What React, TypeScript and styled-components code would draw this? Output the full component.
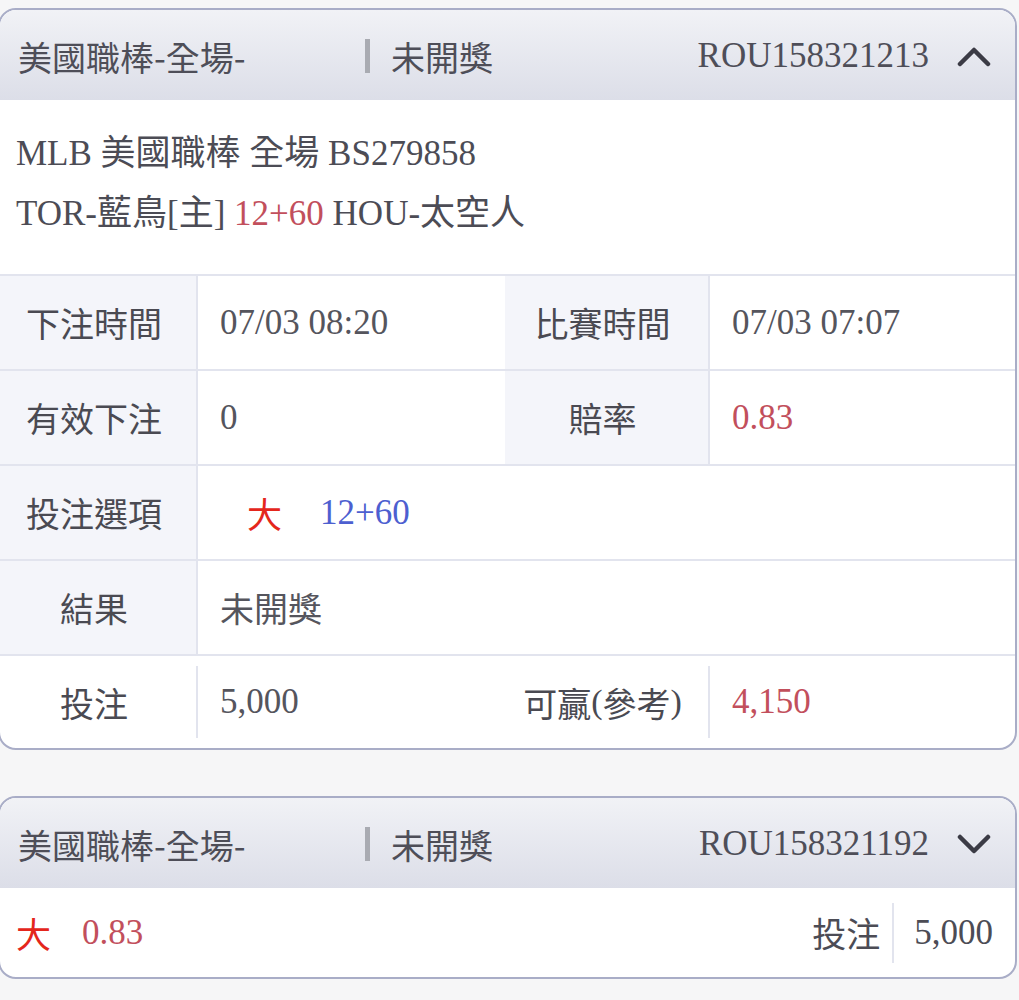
import styled, {createGlobalStyle} from "styled-components"

const GlobalStyle = createGlobalStyle`
    html, body {
        margin: 0;
        padding: 0;
        background: #f6f6f7;
    }
    body {
        font-family: "Liberation Serif", "Noto Sans CJK TC", serif;
        color: #4c4c55;
    }
`

const Page = styled.div`
    width: 1019px;
    padding: 8px 2px 0 0;
    box-sizing: border-box;
    display: flex;
    flex-direction: column;
    gap: 46px;
`

const Card = styled.div`
    margin-left: -2px;
    border: 2px solid #a9adc7;
    border-radius: 18px;
    overflow: hidden;
    background: #fff;
`

const Header = styled.div`
    height: 90px;
    display: flex;
    flex-direction: row;
    align-items: center;
    padding: 2px 24px 0 18px;
    box-sizing: border-box;
    background: linear-gradient(180deg, #f1f2f6 0%, #dcdee8 100%);
    font-size: 34px;
    color: #4e4e58;
    .title{
        width: 347px;
        font-family: "Noto Sans CJK TC", sans-serif;
    }
    .status{
        display: flex;
        align-items: center;
        font-family: "Noto Sans CJK TC", sans-serif;
        &::before{
            content: "";
            display: block;
            width: 5px;
            height: 34px;
            background: #a9abb2;
            margin-right: 21px;
        }
    }
    .order{
        margin-left: auto;
        font-size: 35px;
        margin-right: 28px;
    }
`

const Info = styled.div`
    padding: 24px 16px 30px;
    font-size: 35px;
    line-height: 60px;
    color: #4c4c55;
    border-bottom: 2px solid #e2e4ee;
`

const Red = styled.span`
    color: #c24f5c;
`

const Big = styled.span<{$gap?: number, $after?: number}>`
    color: #e4261c;
    font-family: "Noto Sans CJK TC", sans-serif;
    margin-left: ${p => p.$gap || 0}px;
    margin-right: ${p => p.$after ?? 38}px;
`

const Blue = styled.span`
    color: #4d5fd0;
`

const Grid = styled.div`
    display: grid;
    grid-template-columns: 196px 309px 203px 1fr;
`

const Label = styled.div<{$plain?: boolean}>`
    height: 93px;
    display: flex;
    align-items: center;
    justify-content: center;
    padding-right: 8px;
    font-family: "Noto Sans CJK TC", sans-serif;
    font-size: 34px;
    color: #4a4a52;
    background: ${p => p.$plain ? "#fff" : "#f4f5fa"};
    border-bottom: 2px solid #e2e4ee;
    box-sizing: content-box;
`

const Value = styled.div<{$span?: boolean}>`
    height: 93px;
    display: flex;
    align-items: center;
    padding-left: 22px;
    font-size: 35px;
    color: #55555d;
    border-left: 2px solid #e2e4ee;
    border-bottom: 2px solid #e2e4ee;
    grid-column: ${p => p.$span ? "span 3" : "auto"};
    box-sizing: content-box;
    .cjk{
        font-family: "Noto Sans CJK TC", sans-serif;
        font-size: 34px;
    }
`

const LastLabel = styled.div`
    height: 92px;
    display: flex;
    align-items: center;
    justify-content: center;
    padding-right: 8px;
    font-size: 34px;
    color: #4a4a52;
    .cjk{
        font-family: "Noto Sans CJK TC", sans-serif;
    }
`

const LastValue = styled.div`
    height: 92px;
    display: flex;
    align-items: center;
    font-size: 35px;
    color: #55555d;
    .inner{
        height: 72px;
        display: flex;
        align-items: center;
        padding-left: 22px;
        border-left: 2px solid #e2e4ee;
        flex: 1;
    }
`

const Summary = styled.div`
    height: 89px;
    display: flex;
    flex-direction: row;
    align-items: center;
    padding: 0 22px 0 16px;
    font-size: 35px;
    .right{
        margin-left: auto;
        display: flex;
        align-items: center;
        height: 60px;
        color: #4c4c55;
    }
    .label{
        font-family: "Noto Sans CJK TC", sans-serif;
        font-size: 34px;
        padding-right: 12px;
        border-right: 2px solid #e2e4ee;
        height: 60px;
        display: flex;
        align-items: center;
    }
    .num{
        padding-left: 20px;
    }
`

const Chevron = ({up}: {up?: boolean}) => (
    <svg width="34" height="22" viewBox="0 0 34 22">
        <polyline
            points={up ? "3,19 17,5 31,19" : "3,4 17,18 31,4"}
            fill="none"
            stroke="#3b3b45"
            strokeWidth="4.5"
            strokeLinecap="round"
            strokeLinejoin="round"
        />
    </svg>
)

const CardHeader = ({order, up}: {order: string, up?: boolean}) => (
    <Header>
        <div className="title">美國職棒-全場-</div>
        <div className="status">未開獎</div>
        <div className="order">{order}</div>
        <Chevron up={up} />
    </Header>
)

export default function App(){
    return (
        <>
            <GlobalStyle />
            <Page>
                <Card>
                    <CardHeader order="ROU158321213" up />
                    <Info>
                        <div>MLB 美國職棒 全場 BS279858</div>
                        <div>TOR-藍鳥[主] <Red>12+60</Red> HOU-太空人</div>
                    </Info>
                    <Grid>
                        <Label>下注時間</Label>
                        <Value>07/03 08:20</Value>
                        <Label>比賽時間</Label>
                        <Value>07/03 07:07</Value>

                        <Label>有效下注</Label>
                        <Value>0</Value>
                        <Label>賠率</Label>
                        <Value><Red>0.83</Red></Value>

                        <Label>投注選項</Label>
                        <Value $span><Big $gap={27}>大</Big><Blue>12+60</Blue></Value>

                        <Label>結果</Label>
                        <Value $span><span className="cjk">未開獎</span></Value>

                        <LastLabel><span className="cjk">投注</span></LastLabel>
                        <LastValue><div className="inner">5,000</div></LastValue>
                        <LastLabel><span className="cjk">可贏</span>(<span className="cjk">參考</span>)</LastLabel>
                        <LastValue><div className="inner"><Red>4,150</Red></div></LastValue>
                    </Grid>
                </Card>

                <Card>
                    <CardHeader order="ROU158321192" />
                    <Summary>
                        <Big $after={31}>大</Big>
                        <Red>0.83</Red>
                        <div className="right">
                            <div className="label">投注</div>
                            <div className="num">5,000</div>
                        </div>
                    </Summary>
                </Card>
            </Page>
        </>
    )
}
